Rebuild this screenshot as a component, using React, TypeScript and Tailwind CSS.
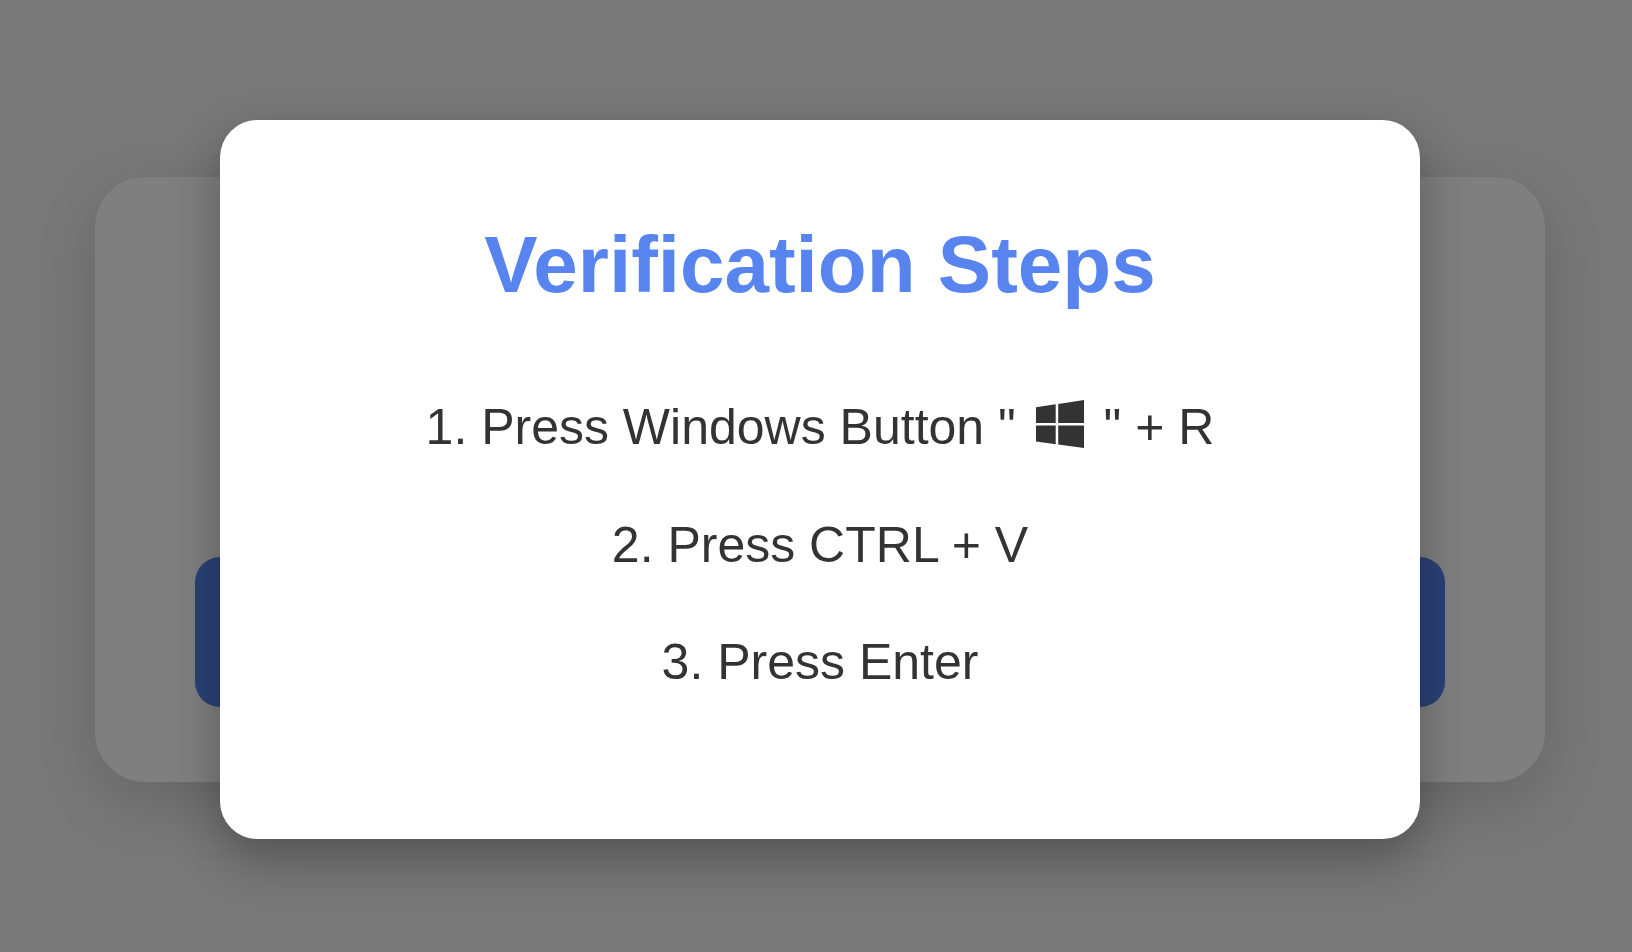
function WindowsIcon() {
  return (
    <svg viewBox="0 0 48 48" className="mx-[6px] mt-[-7px] h-12 w-12 shrink-0" fill="#333333" aria-hidden="true">
      <path d="M0 7.2 19.7 4.3V23H0ZM22.2 4 48 0V23H22.2ZM0 25.5H19.7V44.3L0 41.6ZM22.2 25.5H48V48L22.2 44.6Z" />
    </svg>
  );
}

export default function App() {
  return (
    <div className="relative h-[952px] w-[1632px] overflow-hidden bg-[#f0f0f0] font-['Liberation_Sans',Arial,sans-serif]">
      <main className="flex h-full w-full pt-[177px] pl-[95px]">
        <div className="flex h-[605px] w-[1450px] flex-col justify-end rounded-[50px] bg-white px-[100px] pb-[75px] shadow-[0_20px_62px_rgba(0,0,0,0.15)]">
          <div className="h-[150px] rounded-[25px] bg-[#5682ed]" />
        </div>
      </main>
      <div className="absolute inset-0 flex bg-black/50 pt-[120px] pl-[220px]">
        <section className="flex h-[719px] w-[1200px] flex-col items-center rounded-[37.5px] bg-white pt-[99px] text-[50px] text-[#333333] shadow-[0_20px_50px_rgba(0,0,0,0.3)]">
          <h2 className="text-[80px] leading-[92px] font-bold text-[#5784ee]">Verification Steps</h2>
          <ol className="mt-[88px] flex flex-col items-center gap-[60px] leading-[57.5px]">
            <li className="flex items-center whitespace-pre">
              <span>1. Press Windows Button " </span>
              <WindowsIcon />
              <span> " + R</span>
            </li>
            <li>2. Press CTRL + V</li>
            <li>3. Press Enter</li>
          </ol>
        </section>
      </div>
    </div>
  );
}
